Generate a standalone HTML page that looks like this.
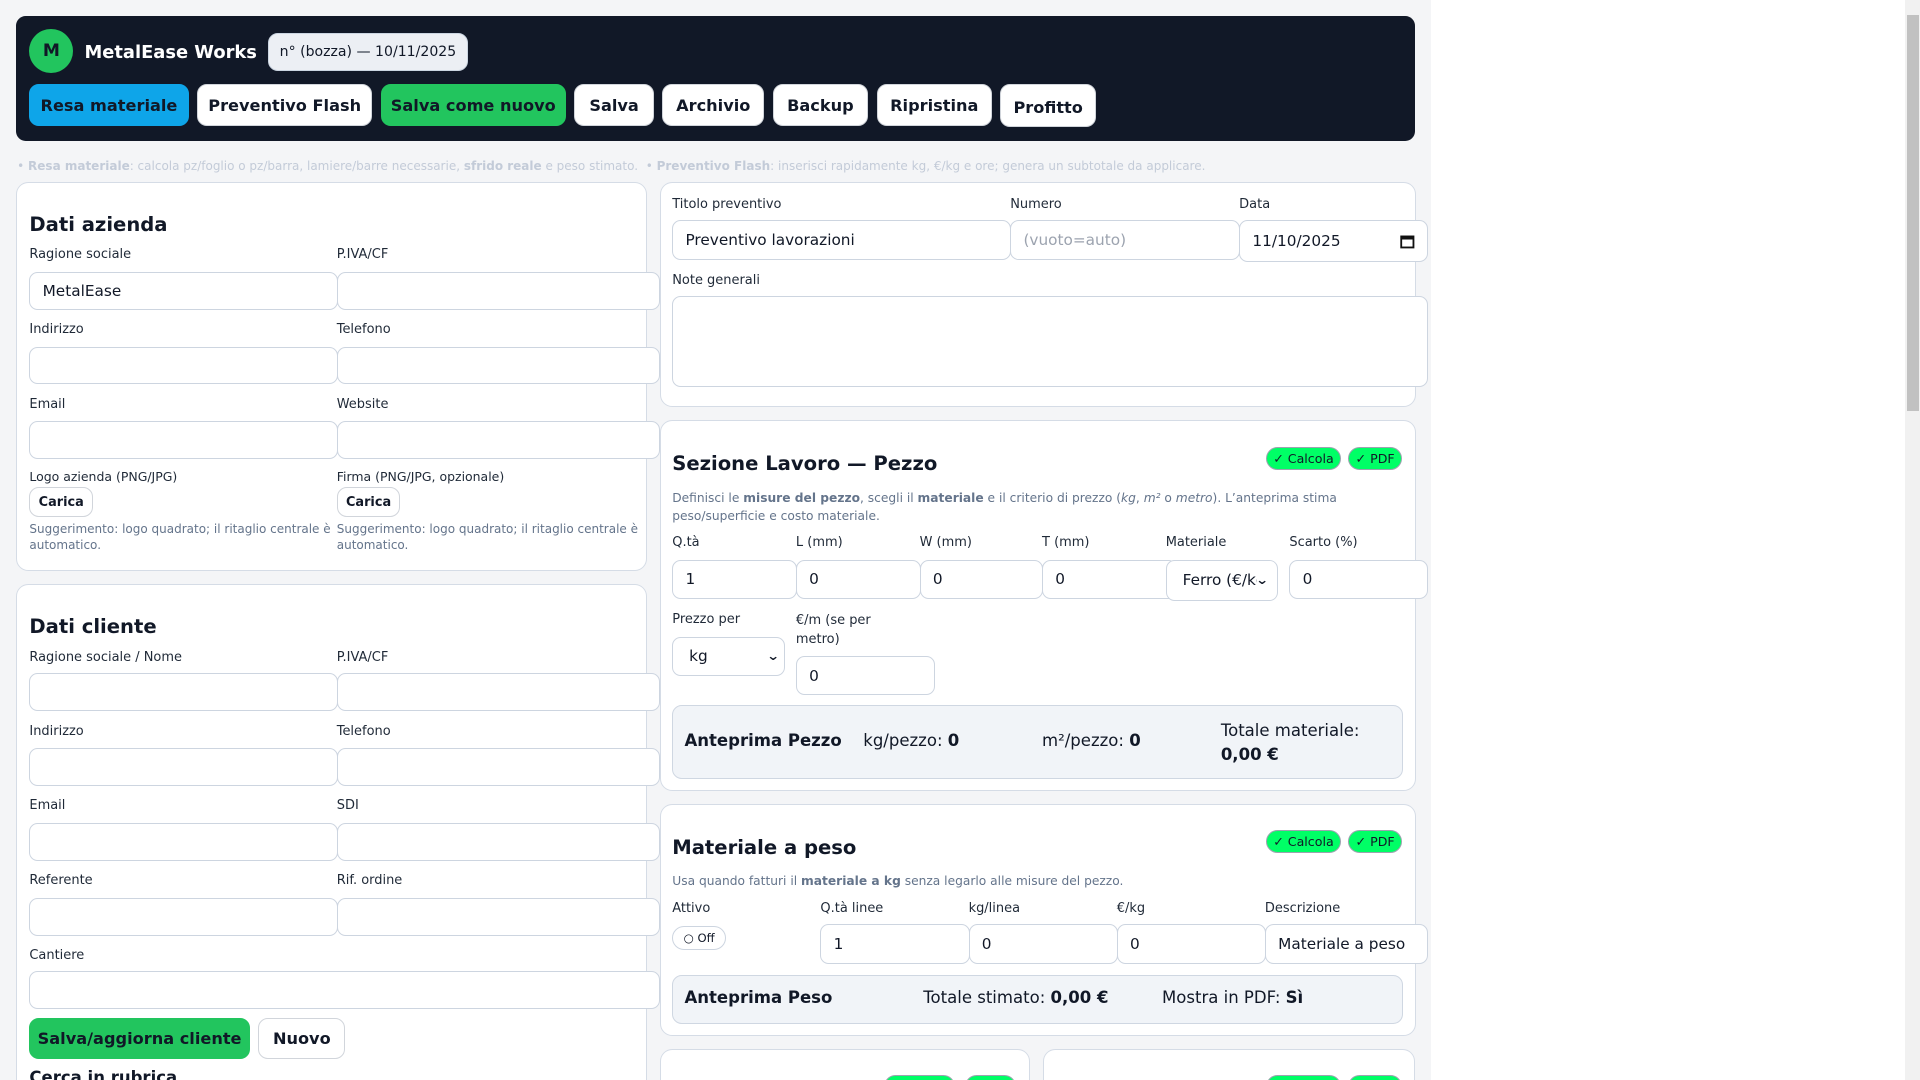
<!DOCTYPE html>
<html><head><meta charset="utf-8"><style>
*{box-sizing:border-box;margin:0;padding:0}
html,body{width:1920px;height:1080px;overflow:hidden;background:#fff}
#z{zoom:1.22449;position:relative;width:1568px;height:882px;font-family:"DejaVu Sans","Liberation Sans",sans-serif;color:#111827}
.a{position:absolute}
.bg{left:0;top:0;width:1169px;height:882px;background:#f4f5f7}
.card{background:#fff;border:1px solid #d5dce6;border-radius:10px}
.lb{font-size:10.6px;color:#1f2937;white-space:nowrap}
.in{background:#fff;border:1px solid #cdd5e0;border-radius:7px;font-size:12.5px;padding-left:10px;display:flex;align-items:center;color:#111827}
.h2{font-size:16px;font-weight:bold;color:#111827;white-space:nowrap}
.btn{border-radius:8px;font-size:13.2px;font-weight:bold;display:flex;align-items:center;justify-content:center;background:#fff;border:1px solid #d1d5db;color:#111827;white-space:nowrap}
.bdg{background:#00ff66;border:1px solid #9ca3af;border-radius:10px;font-size:10.3px;display:flex;align-items:center;justify-content:center;color:#111827}
.sm{font-size:9.8px;color:#64748b;line-height:13px}
.pv{background:#f1f4f8;border:1px solid #cfd7e2;border-radius:8px}
.pt{font-size:13.5px;white-space:nowrap}
.ch{font-size:10px;font-weight:bold;transform:scaleX(1.3)}
</style></head><body><div id="z">
<div class="a bg"></div>
<div class="a" style="left:1556px;top:0;width:12px;height:882px;background:#f1f1f1"></div>
<div class="a" style="left:1557px;top:12px;width:10px;height:324px;background:#c1c1c1"></div>

<div class="a" style="left:13px;top:13px;width:1143px;height:102px;background:#111827;border-radius:8px"></div>
<div class="a" style="left:24px;top:24px;width:36px;height:36px;border-radius:50%;background:#22c55e;font-size:14px;font-weight:bold;display:flex;align-items:center;justify-content:center">M</div>
<div class="a" style="left:69px;top:34px;font-size:14.6px;font-weight:bold;color:#fff">MetalEase Works</div>
<div class="a" style="left:219px;top:27px;width:163px;height:31px;background:#eceff4;border:1px solid #cbd5e1;border-radius:8px;font-size:11.5px;display:flex;align-items:center;justify-content:center">n° (bozza) — 10/11/2025</div>
<div class="a btn" style="left:24px;top:69px;width:130px;height:34px;background:#0ea5e9;border-color:#0ea5e9">Resa materiale</div>
<div class="a btn" style="left:161px;top:69px;width:143px;height:34px">Preventivo Flash</div>
<div class="a btn" style="left:311px;top:69px;width:151px;height:34px;background:#22c55e;border-color:#22c55e">Salva come nuovo</div>
<div class="a btn" style="left:469px;top:69px;width:65px;height:34px">Salva</div>
<div class="a btn" style="left:541px;top:69px;width:83px;height:34px">Archivio</div>
<div class="a btn" style="left:631px;top:69px;width:78px;height:34px">Backup</div>
<div class="a btn" style="left:716px;top:69px;width:94px;height:34px">Ripristina</div>
<div class="a btn" style="left:817px;top:69px;width:78px;height:35px;padding-top:2px">Profitto</div>

<div class="a" style="left:14px;top:130px;font-size:9.8px;color:#c3cbd8;white-space:nowrap">• <b>Resa materiale</b>: calcola pz/foglio o pz/barra, lamiere/barre necessarie, <b>sfrido reale</b> e peso stimato. &nbsp;• <b>Preventivo Flash</b>: inserisci rapidamente kg, €/kg e ore; genera un subtotale da applicare.</div>

<!-- left card 1 -->
<div class="a card" style="left:13px;top:149px;width:515px;height:317px"></div>
<div class="a h2" style="left:24px;top:174px">Dati azienda</div>
<div class="a lb" style="left:24px;top:202px">Ragione sociale</div><div class="a lb" style="left:275px;top:202px">P.IVA/CF</div>
<div class="a in" style="left:24px;top:222px;width:252px;height:31px">MetalEase</div><div class="a in" style="left:275px;top:222px;width:264px;height:31px"></div>
<div class="a lb" style="left:24px;top:263px">Indirizzo</div><div class="a lb" style="left:275px;top:263px">Telefono</div>
<div class="a in" style="left:24px;top:283px;width:252px;height:31px"></div><div class="a in" style="left:275px;top:283px;width:264px;height:31px"></div>
<div class="a lb" style="left:24px;top:324px">Email</div><div class="a lb" style="left:275px;top:324px">Website</div>
<div class="a in" style="left:24px;top:344px;width:252px;height:31px"></div><div class="a in" style="left:275px;top:344px;width:264px;height:31px"></div>
<div class="a lb" style="left:24px;top:383px;font-size:10.2px">Logo azienda (PNG/JPG)</div><div class="a lb" style="left:275px;top:383px;font-size:10.2px">Firma (PNG/JPG, opzionale)</div>
<div class="a btn" style="left:24px;top:398px;width:52px;height:24px;font-size:10.5px">Carica</div>
<div class="a btn" style="left:275px;top:398px;width:52px;height:24px;font-size:10.5px">Carica</div>
<div class="a sm" style="left:24px;top:426px;width:248px">Suggerimento: logo quadrato; il ritaglio centrale è automatico.</div>
<div class="a sm" style="left:275px;top:426px;width:248px">Suggerimento: logo quadrato; il ritaglio centrale è automatico.</div>

<!-- left card 2 -->
<div class="a card" style="left:13px;top:477px;width:515px;height:420px"></div>
<div class="a h2" style="left:24px;top:502px">Dati cliente</div>
<div class="a lb" style="left:24px;top:531px">Ragione sociale / Nome</div><div class="a lb" style="left:275px;top:531px">P.IVA/CF</div>
<div class="a in" style="left:24px;top:550px;width:252px;height:31px"></div><div class="a in" style="left:275px;top:550px;width:264px;height:31px"></div>
<div class="a lb" style="left:24px;top:591px">Indirizzo</div><div class="a lb" style="left:275px;top:591px">Telefono</div>
<div class="a in" style="left:24px;top:611px;width:252px;height:31px"></div><div class="a in" style="left:275px;top:611px;width:264px;height:31px"></div>
<div class="a lb" style="left:24px;top:652px">Email</div><div class="a lb" style="left:275px;top:652px">SDI</div>
<div class="a in" style="left:24px;top:672px;width:252px;height:31px"></div><div class="a in" style="left:275px;top:672px;width:264px;height:31px"></div>
<div class="a lb" style="left:24px;top:713px">Referente</div><div class="a lb" style="left:275px;top:713px">Rif. ordine</div>
<div class="a in" style="left:24px;top:733px;width:252px;height:31px"></div><div class="a in" style="left:275px;top:733px;width:264px;height:31px"></div>
<div class="a lb" style="left:24px;top:774px">Cantiere</div>
<div class="a in" style="left:24px;top:793px;width:515px;height:31px"></div>
<div class="a btn" style="left:24px;top:831px;width:180px;height:34px;background:#22c55e;border-color:#22c55e">Salva/aggiorna cliente</div>
<div class="a btn" style="left:211px;top:831px;width:71px;height:34px">Nuovo</div>
<div class="a" style="left:24px;top:872px;font-size:13.5px;font-weight:bold">Cerca in rubrica</div>

<!-- right card 1 -->
<div class="a card" style="left:539px;top:149px;width:617px;height:183px"></div>
<div class="a lb" style="left:549px;top:161px">Titolo preventivo</div><div class="a lb" style="left:825px;top:161px">Numero</div><div class="a lb" style="left:1012px;top:161px">Data</div>
<div class="a in" style="left:549px;top:180px;width:277px;height:32px">Preventivo lavorazioni</div>
<div class="a in" style="left:825px;top:180px;width:188px;height:32px;color:#9ca3af">(vuoto=auto)</div>
<div class="a in" style="left:1012px;top:180px;width:154px;height:34px;justify-content:space-between;padding-right:10px">11/10/2025<svg width="12" height="12" viewBox="0 0 12 12"><rect x="1" y="2" width="10" height="9" fill="none" stroke="#111" stroke-width="1.5"/><rect x="1" y="2" width="10" height="2.5" fill="#111"/></svg></div>
<div class="a lb" style="left:549px;top:223px">Note generali</div>
<div class="a in" style="left:549px;top:242px;width:617px;height:74px"></div>

<!-- right card 2 -->
<div class="a card" style="left:539px;top:343px;width:617px;height:303px"></div>
<div class="a h2" style="left:549px;top:369px">Sezione Lavoro — Pezzo</div>
<div class="a bdg" style="left:1034px;top:365px;width:61px;height:19px">✓ Calcola</div>
<div class="a bdg" style="left:1101px;top:365px;width:44px;height:19px">✓ PDF</div>
<div class="a sm" style="left:549px;top:400px;width:560px;font-size:10px;line-height:14.5px">Definisci le <b>misure del pezzo</b>, scegli il <b>materiale</b> e il criterio di prezzo (<i>kg</i>, <i>m²</i> o <i>metro</i>). L’anteprima stima peso/superficie e costo materiale.</div>
<div class="a lb" style="left:549px;top:437px">Q.tà</div><div class="a lb" style="left:650px;top:437px">L (mm)</div><div class="a lb" style="left:751px;top:437px">W (mm)</div><div class="a lb" style="left:851px;top:437px">T (mm)</div><div class="a lb" style="left:952px;top:437px">Materiale</div><div class="a lb" style="left:1053px;top:437px">Scarto (%)</div>
<div class="a in" style="left:549px;top:457px;width:102px;height:32px">1</div>
<div class="a in" style="left:650px;top:457px;width:102px;height:32px">0</div>
<div class="a in" style="left:751px;top:457px;width:101px;height:32px">0</div>
<div class="a in" style="left:851px;top:457px;width:110px;height:32px">0</div>
<div class="a in" style="left:952px;top:457px;width:92px;height:34px;overflow:hidden;white-space:nowrap;padding-left:13px">Ferro (€/kg<span class="a" style="right:1px;top:0;height:32px;width:16px;background:#fff;display:flex;align-items:center"><span class="ch">⌄</span></span></div>
<div class="a in" style="left:1053px;top:457px;width:113px;height:32px">0</div>
<div class="a lb" style="left:549px;top:500px">Prezzo per</div>
<div class="a lb" style="left:650px;top:500px;line-height:15px">€/m (se per<br>metro)</div>
<div class="a in" style="left:549px;top:520px;width:92px;height:32px;padding-left:13px;justify-content:space-between;padding-right:5px">kg<span class="ch">⌄</span></div>
<div class="a in" style="left:650px;top:536px;width:114px;height:32px">0</div>
<div class="a pv" style="left:549px;top:576px;width:597px;height:60px"></div>
<div class="a pt" style="left:559px;top:597px;font-weight:bold">Anteprima Pezzo</div>
<div class="a pt" style="left:705px;top:597px">kg/pezzo: <b>0</b></div>
<div class="a pt" style="left:851px;top:597px">m²/pezzo: <b>0</b></div>
<div class="a pt" style="left:997px;top:587px;line-height:20px">Totale materiale:<br><b>0,00 €</b></div>

<!-- right card 3 -->
<div class="a card" style="left:539px;top:657px;width:617px;height:189px"></div>
<div class="a h2" style="left:549px;top:683px">Materiale a peso</div>
<div class="a bdg" style="left:1034px;top:678px;width:61px;height:19px">✓ Calcola</div>
<div class="a bdg" style="left:1101px;top:678px;width:44px;height:19px">✓ PDF</div>
<div class="a sm" style="left:549px;top:714px;font-size:10px;white-space:nowrap">Usa quando fatturi il <b>materiale a kg</b> senza legarlo alle misure del pezzo.</div>
<div class="a lb" style="left:549px;top:736px">Attivo</div><div class="a lb" style="left:670px;top:736px">Q.tà linee</div><div class="a lb" style="left:791px;top:736px">kg/linea</div><div class="a lb" style="left:912px;top:736px">€/kg</div><div class="a lb" style="left:1033px;top:736px">Descrizione</div>
<div class="a" style="left:549px;top:756px;width:44px;height:20px;border:1px solid #cdd5e0;border-radius:10px;font-size:9.5px;display:flex;align-items:center;justify-content:center">○ Off</div>
<div class="a in" style="left:670px;top:755px;width:122px;height:32px">1</div>
<div class="a in" style="left:791px;top:755px;width:122px;height:32px">0</div>
<div class="a in" style="left:912px;top:755px;width:122px;height:32px">0</div>
<div class="a in" style="left:1033px;top:755px;width:133px;height:32px">Materiale a peso</div>
<div class="a pv" style="left:549px;top:796px;width:597px;height:40px"></div>
<div class="a pt" style="left:559px;top:807px;font-weight:bold">Anteprima Peso</div>
<div class="a pt" style="left:754px;top:807px">Totale stimato: <b>0,00 €</b></div>
<div class="a pt" style="left:949px;top:807px">Mostra in PDF: <b>Sì</b></div>

<!-- bottom cards -->
<div class="a card" style="left:539px;top:857px;width:302px;height:60px"></div>
<div class="a card" style="left:852px;top:857px;width:304px;height:60px"></div>
<div class="a bdg" style="left:722px;top:878px;width:58px;height:19px"></div>
<div class="a bdg" style="left:788px;top:878px;width:42px;height:19px"></div>
<div class="a bdg" style="left:1034px;top:878px;width:61px;height:19px"></div>
<div class="a bdg" style="left:1101px;top:878px;width:44px;height:19px"></div>
</div></body></html>
